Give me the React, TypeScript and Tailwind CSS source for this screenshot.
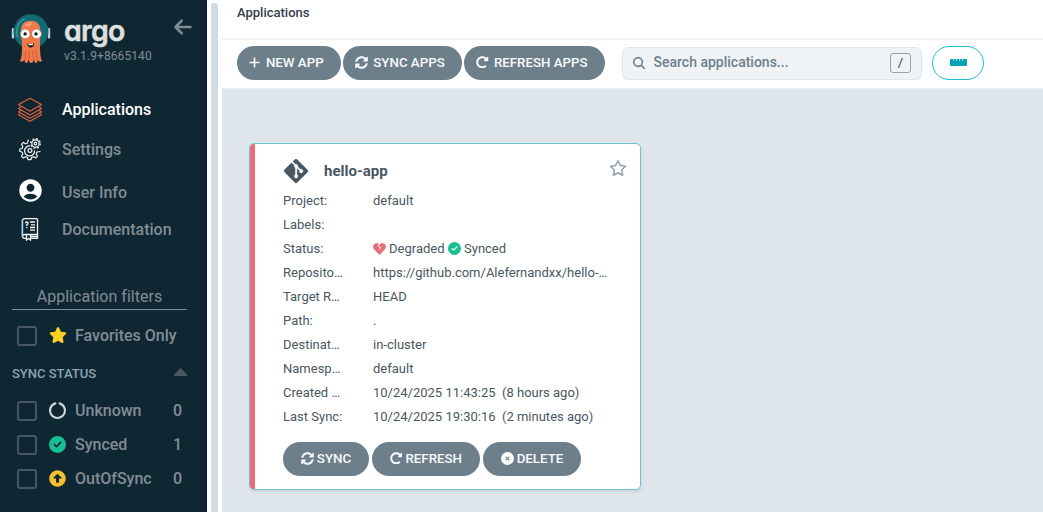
import React from "react";
import { FaPlus, FaMagnifyingGlass, FaStar, FaRegStar, FaCircleNotch, FaCircleCheck, FaGitAlt, FaArrowLeft } from "react-icons/fa6";
import { FaArrowAltCircleUp, FaSyncAlt, FaRedoAlt } from "react-icons/fa";
import { MdAccountCircle } from "react-icons/md";

function Mascot() {
  return (
    <svg width="40" height="52" viewBox="0 0 40 52" className="block">
      <rect x="0.8" y="15" width="2.400" height="10.500" rx="1" fill="#b9d3e3" />
      <rect x="36.800" y="15" width="2.400" height="10.500" rx="1" fill="#b9d3e3" />
      <circle cx="20" cy="18.500" r="17.500" fill="#1d5a65" />
      <circle cx="20" cy="18.700" r="16.600" fill="#0e6c74" />
      <path d="M6.500 24C4 17 7 9 13.500 6" fill="none" stroke="#4d9da2" strokeWidth="1.200" strokeLinecap="round" />
      <path
        d="M10 17C10 11 14 7.800 19.700 7.800S29.300 11 29.300 17C29.300 23 29 27 29 33C29 40 29.500 44 31 48C29.500 49.500 27.500 48.500 26.500 46.500C26.500 48.500 26.500 50 25 50C23.500 49.500 23.500 48 23 46.500C22 48.500 22 50 20 50C18.500 50 18.500 48.500 17.500 46.500C17 48.500 16.500 50 15 50C13.500 49.500 14 48 13.500 46.500C12.500 48.500 10.500 49.500 9 48C11 44 11 40 11 33C11 27 10 23 10 17Z"
        fill="#f0794c"
      />
      <path d="M15 37.500L13.800 46M18.300 37.500L17.800 46M21.700 37.500L22.600 46M25 37.500L26.300 46" stroke="#cf5530" strokeWidth="0.9" />
      <ellipse cx="17.500" cy="11.500" rx="3.500" ry="1.600" fill="#f7a07a" transform="rotate(-20 17.500 11.500)" />
      <circle cx="14.200" cy="20.900" r="4.900" fill="#fff" stroke="#d95b33" strokeWidth="0.7" />
      <circle cx="25.500" cy="20.900" r="4.900" fill="#fff" stroke="#d95b33" strokeWidth="0.7" />
      <circle cx="14.100" cy="20.900" r="1.700" fill="#111820" />
      <circle cx="25" cy="20.900" r="1.700" fill="#111820" />
      <path d="M16.300 30.400C18 31.500 21.500 31.500 23.200 30.400C23.200 33 21.700 34.500 19.700 34.500S16.500 33 16.300 30.400Z" fill="#151c22" />
      <path d="M17.600 31H21.900V32.200H17.600Z" fill="#fff" />
    </svg>
  );
}

function LayersIcon() {
  return (
    <svg width="26" height="26" viewBox="0 0 26 26" fill="none" stroke="#e5623f" strokeWidth="1.100" strokeLinejoin="round" className="block">
      <path d="M13 1.300L24.500 7.500L13 14.300L1.500 7.500Z" />
      <path d="M4 9.700L1.500 11.500L13 17.900L24.500 11.500L22 9.700" />
      <path d="M4 13.200L1.500 15L13 21.300L24.500 15L22 13.200" />
      <path d="M2.500 16.500L1.500 17.800L13 24.300L24.500 17.800L23.500 16.500" />
    </svg>
  );
}

function GearsIcon() {
  return (
    <svg width="24" height="24" viewBox="0 0 24 24" fill="none" stroke="#f2f4f5" strokeWidth="1.200" className="relative -top-px block">
      <path strokeLinejoin="round" d="M11 3L10 3.500L9.500 6L7.500 6.800L5.300 5.400L3.500 7.300L4.800 9.500L4 11.500L1.800 12V14.500L4 15L4.800 17L3.500 19.200L5.300 21L7.500 19.700L9.500 20.500L10 22.700H13L13.500 20.500L15.500 19.700L17.700 21L19.500 19.200L18.200 17L19 15L22.500 14.500" />
      <path d="M12 9A5 5 0 1 0 16.500 13.500" />
      <circle cx="12" cy="13.500" r="1.900" />
      <circle cx="17.500" cy="6.500" r="3.700" />
      <circle cx="17.500" cy="6.500" r="1.300" />
      <circle cx="17.500" cy="6.500" r="4.800" strokeDasharray="1.900 1.870" strokeWidth="1.300" />
    </svg>
  );
}

function BookIcon() {
  return (
    <svg width="18" height="24" viewBox="0 0 18 24" fill="none" stroke="#f4f6f7" strokeWidth="1.300" className="relative -top-px block">
      <path d="M3.500 1.600H15.500Q16.500 1.600 16.500 2.600V17.500H3.500Q1.500 17.500 1.500 19.500V3.600Q1.500 1.600 3.500 1.600Z" />
      <path d="M1.500 19.200Q1.500 21.300 3.500 21.300H5M10 21.300H16.500V17.500M10 19.500H16" />
      <path d="M5.500 17.500V23L7.500 21.500L9.500 23V17.500" />
      <path d="M1 19V3.500" stroke="#5fb7ea" strokeWidth="1" />
      <path d="M4.500 6.200Q4.500 5 5.800 5T7 6.200Q7 7.200 5.800 7.700V9M5.800 10V11.200" />
      <path d="M9 5H14M10 7.800H14M9 10.500H14M9 13.200H14" />
    </svg>
  );
}

const nav = [
  { label: "Applications", icon: <LayersIcon />, row: "h-10 text-white" },
  { label: "Settings", icon: <GearsIcon />, row: "h-10 text-[#818d94]" },
  { label: "User Info", icon: <MdAccountCircle size={27} color="#fff" className="relative -top-[3px]" />, row: "h-[46px] text-[#818d94]" },
  { label: "Documentation", icon: <BookIcon />, row: "h-7 text-[#818d94]" },
];

const statuses = [
  { label: "Unknown", count: 0, icon: <FaCircleNotch size={17} color="#ccd6dd" /> },
  { label: "Synced", count: 1, icon: <FaCircleCheck size={17} color="#18be94" /> },
  { label: "OutOfSync", count: 0, icon: <FaArrowAltCircleUp size={17} color="#f4c030" /> },
];

function Checkbox() {
  return <span className="box-border h-5 w-5 shrink-0 rounded-[3px] border-2 border-[#495763]" />;
}

function Sidebar() {
  return (
    <aside className="flex h-full w-[207px] shrink-0 flex-col bg-[#0f2733]">
      <div className="flex h-[90px] pl-[11px] pt-[13px]">
        <Mascot />
        <div className="flex w-[112px] flex-col pl-[12.500px]">
          <div className="h-[34px] origin-left scale-x-[0.98] pt-px text-[29px] font-semibold leading-[34px] tracking-[-0.7px] text-[#dee0df] [-webkit-text-stroke:0.5px_#dee0df] [font-family:Inter,sans-serif] [font-feature-settings:'cv11']">
            argo
          </div>
          <div className="pl-[0.500px] text-[12px] leading-[18px] tracking-[0.1px] text-[#818d94]">v3.1.9+8665140</div>
        </div>
        <FaArrowLeft size={20} color="#818d94" className="ml-[10px] mt-1" />
      </div>
      <nav className="flex flex-col">
        {nav.map((n) => (
          <div key={n.label} className={"flex items-center text-[16px] font-medium " + n.row}>
            <span className="flex w-[60px] justify-center">{n.icon}</span>
            <span className="pl-[2px]">{n.label}</span>
          </div>
        ))}
      </nav>
      <div className="ml-3 mt-[41px] flex h-[25px] w-[175px] justify-center border-b border-[#818d94] text-[16px] leading-[23px] tracking-[0.03px] text-[#818d94]">
        Application filters
      </div>
      <div className="mt-[9px] flex h-[34px] items-center pl-[17px] text-[16px] font-medium text-[#818d94]">
        <Checkbox />
        <FaStar size={18} color="#ffce25" className="-mt-[2px] ml-[11.500px]" />
        <span className="ml-[8.500px]">Favorites Only</span>
      </div>
      <div className="flex h-[41px] items-center justify-between pl-3 pr-5 text-[13px] font-medium text-[#8fa4b1]">
        <span>SYNC STATUS</span>
        <svg width="13" height="8" viewBox="0 0 13 8" className="-mt-[3px]">
          <path d="M6.500 0L13 6.500V8H0V6.500Z" fill="#495763" />
        </svg>
      </div>
      {statuses.map((s) => (
        <div key={s.label} className="flex h-[34px] items-center pl-[17px] pr-[25px] text-[16px] font-medium text-[#818d94]">
          <Checkbox />
          <span className="-mt-[2px] ml-3 w-[17px]">{s.icon}</span>
          <span className="ml-[9px] flex-1">{s.label}</span>
          <span>{s.count}</span>
        </div>
      ))}
    </aside>
  );
}

function Button({ icon, label, width }: { icon: React.ReactNode; label: string; width: string }) {
  return (
    <button className={"flex h-[34px] shrink-0 items-center justify-center whitespace-nowrap rounded-full bg-[#6d7f8b] pb-[2px] text-[13.300px] font-medium text-[#f8fafb] " + width}>
      {icon}
      <span className="mt-[2px]">{label}</span>
    </button>
  );
}

function CloseIcon() {
  return (
    <svg width="13" height="13" viewBox="0 0 13 13">
      <circle cx="6.500" cy="6.500" r="6.500" fill="#fff" />
      <path d="M4.600 4.600L8.400 8.400M8.400 4.600L4.600 8.400" stroke="#6d7f8b" strokeWidth="1.100" />
    </svg>
  );
}

function BrokenHeart() {
  return (
    <svg width="13" height="12" viewBox="0 0 13 12">
      <path d="M6.500 1.600C8 -0.200 10.800 -0.100 12.100 1.500C13.300 3 13.200 5 12 6.300L7 11.500Q6.500 12 6 11.500L1 6.300C-0.200 5 -0.300 3 0.900 1.500C2.200 -0.100 5 -0.200 6.500 1.600Z" fill="#e96d76" />
      <path d="M6.300 1L5.400 3.400L7.600 4.500L6.700 6.500" fill="none" stroke="#fff" strokeWidth="1" />
    </svg>
  );
}

const rows: [string, React.ReactNode][] = [
  ["Project:", "default"],
  ["Labels:", ""],
  [
    "Status:",
    <span key="status" className="flex items-center">
      <BrokenHeart />
      <span className="ml-[3px]">Degraded</span>
      <FaCircleCheck size={13} color="#18be94" className="-mt-px ml-[3px]" />
      <span className="ml-[3.500px]">Synced</span>
    </span>,
  ],
  ["Reposito…", "https://github.com/Alefernandxx/hello-…"],
  ["Target R…", "HEAD"],
  ["Path:", "."],
  ["Destinat…", "in-cluster"],
  ["Namesp…", "default"],
  ["Created …", "10/24/2025 11:43:25\u00a0\u00a0(8 hours ago)"],
  ["Last Sync:", "10/24/2025 19:30:16\u00a0\u00a0(2 minutes ago)"],
];

function AppCard() {
  return (
    <section className="ml-[27px] mt-[54px] flex h-[347px] w-[392px] overflow-hidden rounded-[5px] border border-[#6fc3ce] bg-white shadow-[1px_2px_3px_#ccd6dd]">
      <div className="w-[5px] shrink-0 bg-[#e96d76]" />
      <div className="flex flex-1 flex-col pl-7 pr-[13px]">
        <header className="flex h-[45px] items-center pt-[9px]">
          <FaGitAlt size={28} color="#495763" stroke="#fff" strokeWidth="5" className="-ml-[1px] -mr-[1px]" />
          <h2 className="ml-[15px] flex-1 text-[15px] font-bold text-[#495763]">hello-app</h2>
          <FaRegStar size={18} color="#8fa4b1" className="relative -top-[3px]" />
        </header>
        <dl className="text-[13px] leading-6 text-[#495763]">
          {rows.map(([k, v]) => (
            <div key={k} className="flex h-6 items-center whitespace-nowrap">
              <dt className="w-[90px]">{k}</dt>
              <dd>{v}</dd>
            </div>
          ))}
        </dl>
        <div className="mt-[13px] flex gap-[3px]">
          <Button width="w-[86px] gap-[3px]" label="SYNC" icon={<FaSyncAlt size={13} />} />
          <Button width="w-[108px] gap-[3px]" label="REFRESH" icon={<FaRedoAlt size={12.5} />} />
          <Button width="w-[98px] gap-[3px]" label="DELETE" icon={<CloseIcon />} />
        </div>
      </div>
    </section>
  );
}

export default function App() {
  return (
    <div className="flex h-[512px] w-[1043px] overflow-hidden bg-white [font-family:Roboto,sans-serif]">
      <Sidebar />
      <div className="ml-1 mr-1 mt-[3px] w-[7px] shrink-0 rounded-t-[3px] bg-[#d1dbe3]" />
      <main className="flex min-w-0 flex-1 flex-col">
        <div className="h-10 border-b-2 border-[#eff3f6] pl-[15px] text-[13px] font-medium leading-[26px] text-[#363c4a]">Applications</div>
        <div className="flex h-[49px] items-start border-b border-[#eceff2] pl-[15px] pt-[6px]">
          <div className="flex gap-[2px]">
            <Button width="w-[104px] gap-[4.500px] pr-[6px]" label="NEW APP" icon={<FaPlus size={13} />} />
            <Button width="w-[119px] gap-[5px] pr-[5px]" label="SYNC APPS" icon={<FaSyncAlt size={13} />} />
            <Button width="w-[141px] gap-[5px] pr-[5px]" label="REFRESH APPS" icon={<FaRedoAlt size={12.5} />} />
          </div>
          <div className="ml-[17px] mt-[1px] flex h-[33px] w-[300px] items-center rounded-[6px] border border-[#dee6eb] bg-[#eff3f6] pb-px pl-[9.500px] pr-[10px]">
            <FaMagnifyingGlass size={12.5} color="#6d7f8b" />
            <span className="ml-[8.500px] flex-1 pb-px text-[14px] font-medium text-[#6d7f8b]">Search applications...</span>
            <span className="flex h-5 w-[21px] items-center justify-center rounded-[3px] border border-[#8fa4b1] text-[13px] text-[#363c4a]">/</span>
          </div>
          <button className="ml-[10px] flex h-[34px] w-[52px] items-center justify-center rounded-full border border-[#1fbdd0] bg-white pb-[2px]">
            <svg width="17" height="7" viewBox="0 0 17 7">
              <path d="M1 0H3.200V2H3.800V0H6.200V2H6.800V0H9.200V2H9.800V0H12.200V2H12.800V0H16Q17 0 17 1V6Q17 7 16 7H1Q0 7 0 6V1Q0 0 1 0Z" fill="#00a2b3" />
            </svg>
          </button>
        </div>
        <div className="flex-1 bg-[#dee6ec]">
          <AppCard />
        </div>
      </main>
    </div>
  );
}
